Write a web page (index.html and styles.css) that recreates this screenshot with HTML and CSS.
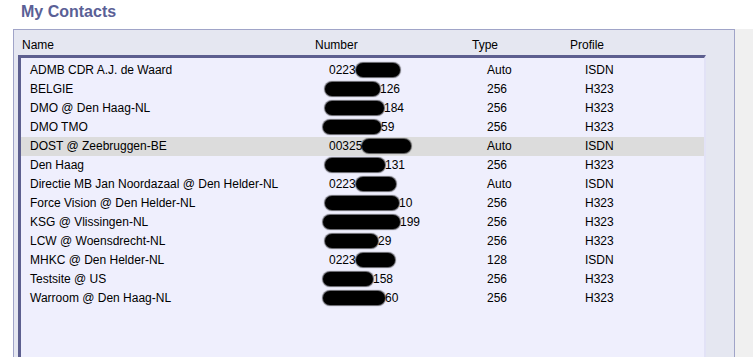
FILE: index.html
```html
<!DOCTYPE html>
<html lang="en">
<head>
    <meta charset="UTF-8">
    <meta name="viewport" content="width=device-width, initial-scale=1.0">
    <title>My Contacts</title>
    <link rel="stylesheet" href="styles.css">
</head>
<body>
    <h1>My Contacts</h1>
    <div class="page">
        <div class="panel">
            <div class="list-header">
                <span>Name</span>
                <span>Number</span>
                <span>Type</span>
                <span>Profile</span>
            </div>
            <div class="list">
                <div class="row"><span>ADMB CDR A.J. de Waard</span><span>0223<i class="blob" style="width:44px"></i></span><span>Auto</span><span>ISDN</span></div>
                <div class="row"><span>BELGIE</span><span><i class="blob lead" style="width:55px"></i>126</span><span>256</span><span>H323</span></div>
                <div class="row"><span>DMO @ Den Haag-NL</span><span><i class="blob lead" style="width:59px"></i>184</span><span>256</span><span>H323</span></div>
                <div class="row"><span>DMO TMO</span><span><i class="blob lead far" style="width:58px"></i>59</span><span>256</span><span>H323</span></div>
                <div class="row selected"><span>DOST @ Zeebruggen-BE</span><span>00325<i class="blob" style="width:49px"></i></span><span>Auto</span><span>ISDN</span></div>
                <div class="row"><span>Den Haag</span><span><i class="blob lead" style="width:60px"></i>131</span><span>256</span><span>H323</span></div>
                <div class="row"><span>Directie MB Jan Noordazaal @ Den Helder-NL</span><span>0223<i class="blob" style="width:40px"></i></span><span>Auto</span><span>ISDN</span></div>
                <div class="row"><span>Force Vision @ Den Helder-NL</span><span><i class="blob lead" style="width:74px"></i>10</span><span>256</span><span>H323</span></div>
                <div class="row"><span>KSG @ Vlissingen-NL</span><span><i class="blob lead far" style="width:77px"></i>199</span><span>256</span><span>H323</span></div>
                <div class="row"><span>LCW @ Woensdrecht-NL</span><span><i class="blob lead" style="width:53px"></i>29</span><span>256</span><span>H323</span></div>
                <div class="row"><span>MHKC @ Den Helder-NL</span><span>0223<i class="blob" style="width:39px"></i></span><span>128</span><span>ISDN</span></div>
                <div class="row"><span>Testsite @ US</span><span><i class="blob lead far" style="width:50px"></i>158</span><span>256</span><span>H323</span></div>
                <div class="row"><span>Warroom @ Den Haag-NL</span><span><i class="blob lead far" style="width:62px"></i>60</span><span>256</span><span>H323</span></div>
            </div>
        </div>
        <div class="side"></div>
    </div>
</body>
</html>
```

FILE: styles.css
```css
html, body {
    overflow: hidden;
}

body {
    font-family: "Liberation Sans", Arial, sans-serif;
    font-size: 12px;
    color: #000;
    margin: 0;
    background-color: #fff;
}

h1 {
    margin: 0 0 7px 21px;
    padding-top: 2px;
    font-size: 16px;
    line-height: 20px;
    color: #5a6096;
}

.page {
    display: flex;
    height: 340px;
}

.panel {
    margin-left: 13px;
    width: 720px;
    border: 1px solid #a0a4c8;
    border-bottom: none;
    background-color: #e5e7f1;
    padding: 0 28px 0 4px;
    display: flex;
    flex-direction: column;
    box-sizing: border-box;
    width: 722px;
}

.side {
    flex: 1;
    background-color: #f0f0f0;
}

.list-header {
    display: grid;
    grid-template-columns: 293px 157px 98px 1fr;
    padding: 7px 0 2px 4px;
    line-height: 16px;
}

.list {
    flex: 1;
    background-color: #efeffd;
    border-style: solid;
    border-width: 3px 2px 0 3px;
    border-color: #5d5f8f #e2e2f6 #e2e2f6 #5d5f8f;
    padding-top: 3px;
}

.row {
    display: grid;
    grid-template-columns: 299px 158px 98px 1fr;
    padding-left: 9px;
    line-height: 19px;
    height: 19px;
    white-space: nowrap;
}

.row.selected {
    background-color: #dcdcdc;
}

/* redacted digits */
.blob {
    display: inline-block;
    height: 14px;
    vertical-align: -3px;
    background-color: #000;
    border-radius: 7px;
    box-shadow: 0 0 1px 1px rgba(0, 0, 0, 0.6);
}

.blob.lead {
    margin-left: -4px;
}

.blob.lead.far {
    margin-left: -6px;
}
```
